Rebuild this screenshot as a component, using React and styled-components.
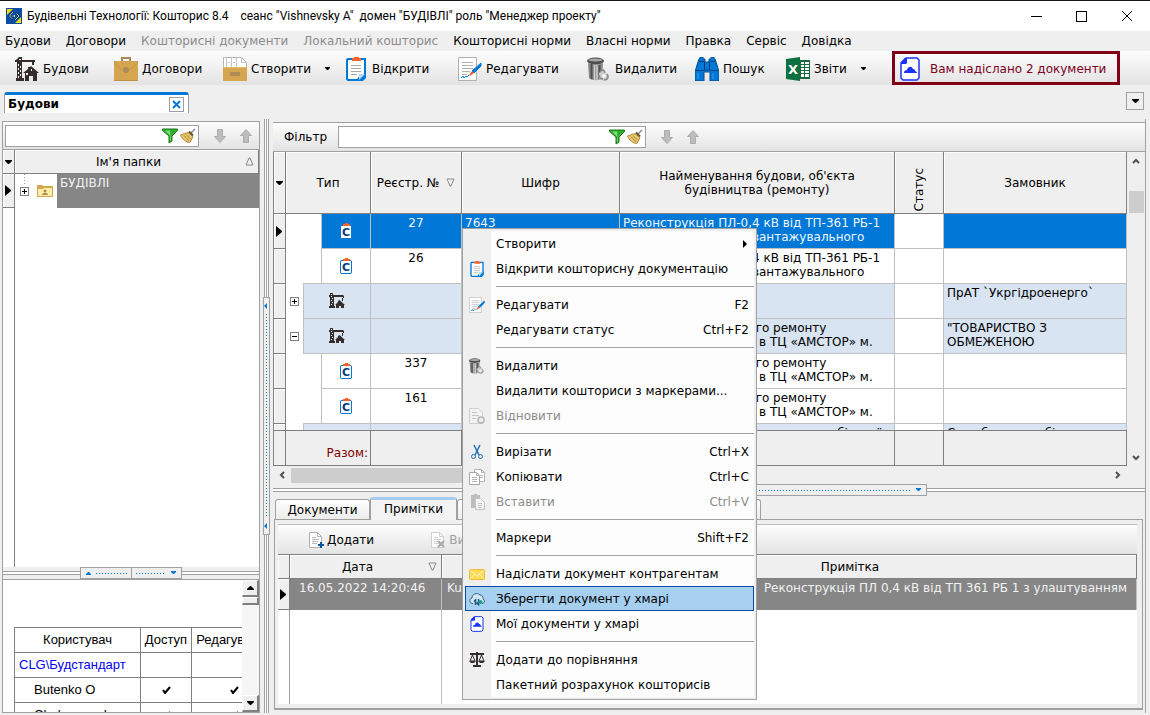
import { useState } from "react";
import styled, { createGlobalStyle, css } from "styled-components";

const GlobalStyle = createGlobalStyle`
  * {
    box-sizing: border-box;
  }
  body {
    margin: 0;
    background: #efefef;
    color: #000;
    font-family: "DejaVu Sans", sans-serif;
    font-size: 12px;
    line-height: 14px;
  }
  button, input {
    font: inherit;
    color: inherit;
    margin: 0;
    padding: 0;
    border: 0;
    background: none;
  }
  svg {
    display: block;
    flex: none;
  }
  table {
    border-collapse: separate;
    border-spacing: 0;
  }
`;

const line = "#a0a0a0";
const dark = "#7f7f7f";
const blue = "#0078d7";
const bars = "linear-gradient(#fdfdfd, #e3e3e3)";

/* ---------- icons ---------- */

const Svg = ({ size = 16, box = 16, children }) => (
  <svg width={size} height={size} viewBox={`0 0 ${box} ${box}`} aria-hidden="true">
    {children}
  </svg>
);

const LogoIcon = () => (
  <Svg>
    <path d="M0 0h16v16H0z" fill="#0a4da2" />
    <path d="M1 1h6L1 7zM15 15H9l6-6z" fill="#f5d90a" />
    <path d="M7 4L3.500 8L6 10.500M9 12l4-4-2.500-2.500" fill="none" stroke="#0a3f86" strokeWidth="3" />
    <path d="M7 4L3.500 8L6 10.500M9 12l4-4-2.500-2.500M6.500 8H8M8.500 7v2" fill="none" stroke="#b9c48c" />
  </Svg>
);

const CraneIcon = ({ size }) => (
  <Svg size={size} box={24}>
    <g fill="#352c2c">
      <path d="M1 3l3-3h3v3h13v2h-1v3h-2V5H7v16h2v3H1v-3h1V5H0V3z" />
      <path d="M16 9l8 7h-2v8h-4v-5h-4v5h-4v-8H8l5-4v-2h2z" />
    </g>
    <path d="M3 7h1v2H3zM5 9h1v2H5zM3 11h1v2H3zM5 13h1v2H5zM3 15h1v2H3zM5 17h1v2H5zM3 19h1v2H3zM4 2h2v1H4z" fill="#fff" />
    <path d="M11 16h2v2h-2zM16 12h1v2h-1z" fill="#eee" />
  </Svg>
);

const SmallCraneIcon = () => (
  <Svg>
    <path d="M1 0h3v2h10l1 1v2h-1V4H5v9h1v2H0v-2h1V4H0V2h1z" fill="#352c2c" />
    <path d="M13 5h1v3h-1zM10.500 7L16 12h-1v3h-3v-2h-2v2H7v-3H6l3-3V8z" fill="#352c2c" />
    <path d="M2 3h1v1H2zM3 5h1v1H3zM2 7h1v1H2zM3 9h1v1H3zM2 11h1v1H2zM2 1h1v1H2z" fill="#fff" />
  </Svg>
);

const BriefcaseIcon = () => (
  <Svg size={24} box={24}>
    <path d="M8 4V1h8v3" fill="none" stroke="#a98a5d" strokeWidth="2" />
    <path d="M0 4h24v20H0z" fill="#d5a550" />
    <path d="M0 4c3 6 7 9 12 9s9-3 12-9" fill="none" stroke="#c49345" />
    <circle cx="12" cy="13" r="3" fill="#ad8a58" />
    <path d="M0 23.500h24" stroke="#c08f43" />
  </Svg>
);

const DrawerIcon = () => (
  <Svg size={24} box={24}>
    <path d="M0.500 0.500h18l5 5v6h-23z" fill="#fff" stroke="#b5b5b5" />
    <path d="M3.500 1v9M8.500 1v9M13.500 1v9M5 5.500h2M10 5.500h2M18.500 1v4.500h5" fill="none" stroke="#c4c4c4" />
    <path d="M0 10h24v14H0z" fill="#d5a550" />
    <path d="M0 10h24v1H0z" fill="#e3bb74" />
    <path d="M7 15h10v4H7z" fill="#ad8a58" />
  </Svg>
);

const ClipboardIcon = ({ size }) => (
  <Svg size={size} box={24}>
    <path d="M4 2h17v17l-4 4H4l-1-1V3z" fill="#fff" stroke={blue} strokeWidth="2" />
    <path d="M13 24v-2l3-4 6-2v5l-3 3z" fill={blue} />
    <path d="M15 17h6l-6 6z" fill="#b8dbf7" />
    <path d="M8 1h2V0h5v1h2v3H8z" fill="#f7632a" />
    <path d="M7 8.500h10M7 11.500h10M7 14.500h10M7 17.500h6" stroke="#a8a8a8" />
  </Svg>
);

const EditIcon = ({ size }) => (
  <Svg size={size} box={24}>
    <path d="M0.500 0.500h18v23h-18z" fill="#fff" stroke="#b0b0b0" />
    <path d="M4 5.500h11M4 8.500h11M4 11.500h11M4 14.500h8M4 17.500h5" stroke="#b0b0b0" />
    <path d="M23 6v3l-7 7-2-2z" fill={blue} stroke={blue} />
    <path d="M14 14l2 2-4 3-1-1z" fill="#f7632a" />
    <path d="M3 21l2-2 1 2 2-2 1 1 2-2" fill="none" stroke={blue} />
  </Svg>
);

const TrashIcon = ({ size }) => (
  <Svg size={size} box={24}>
    <path d="M1 6c4 2 11 2 15 0l-1 15c-3 3-10 3-13 0z" fill="#8a8a8a" />
    <path d="M4.500 7v15M12.500 8v14" stroke="#505050" strokeWidth="2" />
    <path d="M7.500 8v15M10 8v15" stroke="#cfcfcf" strokeWidth="1.500" />
    <ellipse cx="8.500" cy="4" rx="8.500" ry="3.500" fill="#4f4f4f" />
    <ellipse cx="8.500" cy="3" rx="7" ry="1.500" fill="#a9a9a9" />
    <path d="M12 16l5-5 1 5 4 2-1 4-4 2-5-2z" fill="#c9c9c9" />
    <path d="M13 15c2-3 5-2 5 1M20 17c2 3 1 6-3 6M12 18c0 3 2 4 4 4" fill="none" stroke="#8a8a8a" strokeWidth="1.500" />
    <circle cx="17" cy="19" r="2" fill="#f4f4f4" />
  </Svg>
);

const BinocularsIcon = () => (
  <Svg size={24} box={24}>
    <path
      d="M4 2h1V0h3v2h2v3h4V2h2V0h3v2h1l2 6 2 7v9h-9v-9h-6v9H0v-9l2-7z"
      fill={blue}
      stroke="#004f94"
    />
    <path d="M1 13.500h8M15 13.500h8M9.500 5v8h5V5M4 4.500h5M15 4.500h5" fill="none" stroke="#003e77" />
    <path d="M3 16v6M18 16v6" stroke="#3c9ce8" />
  </Svg>
);

const ExcelIcon = () => (
  <Svg size={24} box={24}>
    <path d="M12 3h12v19H12z" fill="#17693e" />
    <path
      d="M15 5h3v2h-3zM19 5h4v2h-4zM15 8h3v2h-3zM19 8h4v2h-4zM15 11h3v2h-3zM19 11h4v2h-4zM15 14h3v2h-3zM19 14h4v2h-4zM15 17h3v3h-3zM19 17h4v3h-4z"
      fill="#fff"
    />
    <path d="M0 2l14-2v24L0 22z" fill="#0d7040" />
    <text x="7" y="17" textAnchor="middle" fontSize="13" fontWeight="700" fill="#fff">
      X
    </text>
  </Svg>
);

const CloudDocIcon = ({ size }) => (
  <Svg size={size} box={24}>
    <path d="M8 1h11l2 2v18l-2 2H5l-2-2V6z" fill="#fff" stroke="#1a34ff" strokeWidth="1.500" />
    <path d="M3 7V5l4-4h2v5l-1 1z" fill="#1a34ff" />
    <path d="M6 16c0-2 1-3 3-3 1-4 5-4 6-1 2 0 2 1 2 2 1 0 2 1 2 2z" fill="#1a34ff" />
  </Svg>
);

const FunnelIcon = () => (
  <Svg>
    <path d="M0.500 1h15v1.500L10 8v5l-3 2V8L0.500 2.500z" fill="#2fae2f" stroke="#177a17" />
    <path d="M3 2.500h5l1 10-1 .500V7.500z" fill="#7fdc7f" />
  </Svg>
);

const BroomIcon = () => (
  <Svg>
    <path d="M14.500 0.500l1 1-4 4-1-1z" fill="#7b8ca3" />
    <path d="M8 4.500l5 4-3 6C6 14.500 2 11 .500 7z" fill="#e6c66e" stroke="#b08c38" />
    <path d="M4 7.500l5 5.500M6 6.500l5 5" stroke="#b08c38" />
    <path d="M9 3.500l4 4" stroke="#6d5a2c" strokeWidth="2" />
  </Svg>
);

const ArrowIcon = ({ up }) => (
  <Svg>
    <path
      d={up ? "M8 1.500l5.500 6h-3v7h-5v-7h-3z" : "M8 14.500l-5.500-6h3v-7h5v7h3z"}
      fill="#bdbdbd"
      stroke="#ababab"
    />
  </Svg>
);

const FolderIcon = () => (
  <Svg>
    <path d="M0 2h5l1 1h10v11H0z" fill="#d5a550" />
    <path d="M1 6h5l1-1h8v8H1z" fill="#fdeea8" />
    <circle cx="8" cy="8" r="1.500" fill="#ad8a58" />
    <path d="M5 12v-1l2-1h2l2 1v1z" fill="#ad8a58" />
  </Svg>
);

const EstimateIcon = () => (
  <Svg>
    <path d="M3 2.500h10l.500 .500v12l-.500 .500H3l-.500-.500V3z" fill="#fff" stroke={blue} />
    <path d="M5 1h2V0h3v1h2v2H5z" fill="#f7632a" />
    <text x="8" y="13" textAnchor="middle" fontSize="11" fontWeight="700" fill="#0b3a78">
      C
    </text>
  </Svg>
);

const RestoreIcon = () => (
  <Svg>
    <path d="M0.500 0.500h9l4 4v11h-13z" fill="#f2f2f2" stroke="#cfcfcf" />
    <path d="M3 4.500h5M3 7.500h7M3 10.500h4" stroke="#c4c4c4" />
    <circle cx="12" cy="12" r="3" fill="#eee" stroke="#b5b5b5" strokeWidth="1.500" />
  </Svg>
);

const ScissorsIcon = () => (
  <Svg>
    <path d="M5 1l5 10M11 1L6 11" stroke="#1d70b8" strokeWidth="1.500" />
    <circle cx="4.500" cy="12.500" r="2" fill="none" stroke="#1d70b8" />
    <circle cx="11.500" cy="12.500" r="2" fill="none" stroke="#1d70b8" />
  </Svg>
);

const CopyIcon = () => (
  <Svg>
    <path d="M5.500 0.500h7l3 3v9h-10z" fill="#fff" stroke="#b5b5b5" />
    <path d="M12.500 0.500v3h3M11 6.500h3M11 8.500h3" fill="none" stroke="#b5b5b5" />
    <path d="M0.500 3.500h7l3 3v9h-10z" fill="#fff" stroke="#a8a8a8" />
    <path d="M7.500 3.500v3h3M3 8.500h5M3 10.500h5M3 12.500h5" fill="none" stroke="#b5b5b5" />
  </Svg>
);

const PasteIcon = () => (
  <Svg>
    <path d="M2 1h3V0h3v1h3v13H2z" fill="#bdbdbd" />
    <path d="M6.500 4.500h5l4 4v7h-9z" fill="#f3f3f3" stroke="#c4c4c4" />
    <path d="M9 9.500h4M9 11.500h4M9 13.500h4" stroke="#c4c4c4" />
  </Svg>
);

const EnvelopeIcon = () => (
  <Svg>
    <rect x="0.500" y="3.500" width="15" height="10" rx="1" fill="#fddc5c" stroke="#f3b93a" />
    <path d="M2 5l6 5 6-5M2 12l4-4M14 12l-4-4" fill="none" stroke="#fff3bd" />
  </Svg>
);

const CloudSyncIcon = () => (
  <Svg>
    <path
      d="M4 12.500C0 12.500 0 7.500 3 7c0-4 5-6 8-3 3 0 3 3 3 4 2 1 2 4-1 4.500"
      fill="#cfe6f7"
      stroke="#35597a"
    />
    <path d="M6.500 14V9L5 10.500M9.500 8v5.500l-2-2" fill="none" stroke="#1f4e78" strokeWidth="1.500" />
    <circle cx="11.500" cy="11" r="2" fill="#17a589" />
  </Svg>
);

const ScalesIcon = () => (
  <Svg>
    <path d="M7 0h2v1h6v2H9v10h3v2H4v-2h3V3H1V1h6z" fill="#352c2c" />
    <path d="M3.500 3L1 9h5zM12.500 3L10 9h5z" fill="none" stroke="#352c2c" />
    <path d="M0 9h7l-2 2H2zM9 9h7l-2 2h-3z" fill="#352c2c" />
  </Svg>
);

const NoteIcon = ({ remove }) => (
  <Svg>
    <path d="M1.500 0.500h8l4 4v11h-12z" fill="#fff" stroke={remove ? "#d0d0d0" : "#b0b0b0"} />
    <path
      d="M9.500 0.500v4h4M4 5.500h4M4 7.500h7M4 9.500h6M4 11.500h5"
      fill="none"
      stroke={remove ? "#d0d0d0" : "#b5b5b5"}
    />
    {remove ? (
      <path d="M8 9l6 6M14 9l-6 6" stroke="#a8a8a8" strokeWidth="2" />
    ) : (
      <path d="M13 10v6M10 13h6" stroke="#0a55a5" strokeWidth="2" />
    )}
  </Svg>
);

const shapes = {
  down: "M0 2h7v1L4 6H3L0 3z",
  up: "M0 6h7V5L4 2H3L0 5z",
  left: "M5 0v8L1 4z",
  right: "M1 0v8l4-4z",
};

const smallShapes = {
  down: "M1 2h5v1L4 5H3L1 3z",
  up: "M1 6h5V5L4 3H3L1 5z",
  left: "M4 1v6L1 4z",
};

const Arrow = ({ dir, small, color = "#000" }) => (
  <svg width="7" height="8" viewBox="0 0 7 8" aria-hidden="true">
    <path d={small ? smallShapes[dir] : shapes[dir]} fill={color} />
  </svg>
);

const RowPointer = () => (
  <svg width="6" height="11" viewBox="0 0 6 11" aria-hidden="true">
    <path d="M0 0l6 5v1l-6 5z" fill="#000" />
  </svg>
);

const SortMark = ({ up }) => (
  <svg width="9" height="9" viewBox="0 0 9 9" aria-hidden="true">
    <path d={up ? "M4 1L1 8h7L5 1z" : "M4 8L1 1h7L5 8z"} fill="none" stroke="#8a8a8a" />
  </svg>
);

const Chevron = ({ dir }) => {
  const d = {
    up: "M1 6l3-3 3 3",
    down: "M1 2l3 3 3-3",
    left: "M6 1L3 4l3 3",
    right: "M2 1l3 3-3 3",
  };
  return (
    <svg width="8" height="8" viewBox="0 0 8 8" aria-hidden="true">
      <path d={d[dir]} fill="none" stroke="#505050" strokeWidth="2" />
    </svg>
  );
};

/* ---------- window frame ---------- */

const Window = styled.div`
  display: flex;
  flex-direction: column;
  width: 100%;
  height: 100vh;
  overflow: hidden;
`;

const TitleBar = styled.header`
  display: flex;
  align-items: center;
  flex: none;
  height: 31px;
  padding: 0 17px 0 6px;
  border-top: 1px solid #1a1318;
  background: #fff;
`;

const Title = styled.h1`
  flex: 1;
  margin: 0 0 0 5px;
  font: 400 12px/16px Roboto, "Noto Sans", sans-serif;
  white-space: pre;
`;

const WindowButtons = styled.div`
  display: flex;
  gap: 34px;
`;

const MenuBar = styled.nav`
  display: flex;
  align-items: center;
  flex: none;
  gap: 15px;
  height: 20px;
  padding: 0 5px;
`;

const MenuBarItem = styled.button`
  white-space: nowrap;
  &:disabled {
    color: #8c8c8c;
  }
`;

const Toolbar = styled.div`
  display: flex;
  flex: none;
  height: 34px;
  padding-left: 15px;
  background: ${bars};
`;

const ToolButton = styled.button`
  display: flex;
  align-items: center;
  gap: 4px;
  width: ${(p) => p.$width}px;
  padding-top: 1px;
  white-space: nowrap;
  & > svg:last-child:not(:first-child) {
    margin-left: 9px;
  }
`;

const Alert = styled.button`
  display: flex;
  align-items: center;
  gap: 8px;
  width: 228px;
  padding: 1px 3px 0;
  border: 3px solid #800018;
  color: #80001c;
  white-space: nowrap;
`;

const TabStrip = styled.div`
  display: flex;
  align-items: flex-start;
  justify-content: space-between;
  flex: none;
  height: 34px;
  padding: 7px 6px 0 4px;
`;

const PageTab = styled.div`
  display: flex;
  align-items: center;
  justify-content: space-between;
  width: 185px;
  height: 21px;
  padding: 0 4px 0 3px;
  border: 1px solid ${line};
  border-top: 3px solid ${blue};
  border-bottom: 0;
  border-radius: 3px 3px 0 0;
  background: #fff;
  font-weight: 700;
`;

const BoxButton = styled.button`
  display: flex;
  align-items: center;
  justify-content: center;
  width: ${(p) => p.$size}px;
  height: ${(p) => p.$size}px;
  border: 1px solid ${line};
`;

const Workspace = styled.main`
  display: flex;
  flex: 1;
  min-height: 0;
  gap: 3px;
  padding: 0 4px 2px 2px;
`;

/* ---------- splitters ---------- */

const Splitter = styled.div`
  display: flex;
  align-items: center;
  justify-content: center;
  flex: none;
  ${(p) =>
    p.$vertical
      ? css`
          width: 7px;
          background: linear-gradient(
            to right,
            transparent 1px,
            ${line} 1px 2px,
            #fff 2px 3px,
            ${line} 3px 4px,
            #fff 4px 5px,
            ${line} 5px 6px,
            transparent 6px
          );
        `
      : css`
          height: 12px;
          background: linear-gradient(
            transparent 4px,
            ${line} 4px 5px,
            #fff 5px 7px,
            ${line} 7px 8px,
            transparent 8px
          );
        `}
`;

const Handle = styled.div`
  display: flex;
  align-items: center;
  justify-content: space-between;
  gap: 4px;
  border: 1px solid ${line};
  background: #efefef;
  ${(p) =>
    p.$vertical
      ? css`
          flex-direction: column;
          width: 7px;
          height: ${p.$length}px;
          padding: 4px 0;
        `
      : css`
          width: ${p.$length}px;
          height: 12px;
          padding: 0 4px;
        `}
`;

const Dots = styled.span`
  flex: 1;
  ${(p) =>
    p.$vertical
      ? css`
          width: 1px;
          background: repeating-linear-gradient(${blue} 0 1px, transparent 1px 3px);
        `
      : css`
          height: 1px;
          background: repeating-linear-gradient(to right, ${blue} 0 1px, transparent 1px 3px);
        `}
`;

const HandleSplit = styled.span`
  width: 1px;
  align-self: stretch;
  background: ${line};
`;

/* ---------- shared grid parts ---------- */

const FilterBar = styled.div`
  display: flex;
  align-items: center;
  flex: none;
  gap: 10px;
  height: ${(p) => p.$height}px;
  padding: 0 2px;
  border-top: 1px solid ${line};
  border-bottom: 1px solid ${line};
  background: ${bars};
`;

const FilterLabel = styled.label`
  padding: 0 1px 0 9px;
`;

const SearchBox = styled.div`
  display: flex;
  align-items: center;
  gap: 2px;
  width: ${(p) => p.$width}px;
  height: 22px;
  margin-right: 3px;
  padding-right: 2px;
  border: 1px solid ${line};
  background: #fff;
`;

const SearchInput = styled.input`
  flex: 1;
  min-width: 0;
  height: 18px;
  padding: 0 4px;
  outline: 0;
`;

const Grid = styled.table`
  width: 100%;
  table-layout: fixed;
`;

const HeadCell = styled.th`
  height: ${(p) => p.$height}px;
  padding: 0 ${(p) => (p.$side ? 0 : 4)}px;
  border-right: 1px solid ${dark};
  border-bottom: 1px solid ${dark};
  background: #efefef;
  box-shadow: inset 1px 1px #fff;
  font-weight: 400;
`;

const HeadInner = styled.div`
  display: flex;
  align-items: center;
  justify-content: center;
  gap: 7px;
  white-space: nowrap;
  & > span {
    flex: ${(p) => (p.$spread ? 1 : "none")};
  }
`;

const SideCell = styled.td`
  padding: 0 0 0 2px;
  border-right: 1px solid ${dark};
  border-bottom: 1px solid ${dark};
  background: #efefef;
  box-shadow: inset 1px 1px #fff;
`;

const VerticalText = styled.div`
  width: 14px;
  margin: 14px auto 0;
  writing-mode: vertical-rl;
  transform: rotate(180deg);
`;

const Expander = styled.button`
  display: flex;
  align-items: center;
  justify-content: center;
  flex: none;
  width: 9px;
  height: 9px;
  border: 1px solid ${dark};
  background: #fff;
`;

const ExpanderSign = ({ open }) => (
  <svg width="5" height="5" viewBox="0 0 5 5" aria-hidden="true">
    <path d={open ? "M0 2h5v1H0z" : "M0 2h2V0h1v2h2v1H3v2H2V3H0z"} fill="#000" />
  </svg>
);

/* ---------- left pane ---------- */

const LeftPane = styled.section`
  display: flex;
  flex-direction: column;
  flex: none;
  width: 258px;
  margin-top: 2px;
  border-left: 1px solid ${line};
  border-right: 1px solid ${line};
`;

const TreeArea = styled.div`
  flex: 1;
  min-height: 0;
  overflow: hidden;
  background: linear-gradient(to right, transparent 11px, ${dark} 11px 12px, transparent 12px) #fff;
`;

const TreeLines = styled.div`
  display: flex;
  align-items: center;
  gap: 8px;
  height: 34px;
  padding-left: 5px;
  background: repeating-linear-gradient(#999 0 1px, transparent 1px 3px) 9px 0 / 1px 12px no-repeat;
`;

const TreeCell = styled.td`
  padding: 0;
`;

const FolderCell = styled.td`
  padding: 2px 3px;
  vertical-align: top;
  background: #868686;
  color: #f2f2f2;
`;

const UsersPane = styled.div`
  display: flex;
  flex: none;
  height: 134px;
  border-top: 1px solid ${line};
  border-bottom: 1px solid ${line};
  background: #fff;
`;

const UsersScroll = styled.div`
  flex: 1;
  min-width: 0;
  padding: 47px 0 0 11px;
  overflow: hidden;
`;

const UsersTable = styled.table`
  width: 264px;
  table-layout: fixed;
  border-top: 1px solid #808080;
  border-left: 1px solid #808080;
  font: 13px/16px "Liberation Sans", sans-serif;

  th,
  td {
    height: 25px;
    padding: 0 3px;
    border-right: 1px solid #808080;
    border-bottom: 1px solid #808080;
    font-weight: 400;
  }
`;

const UserCell = styled.td`
  && {
    padding-left: ${(p) => (p.$group ? 4 : 19)}px;
  }
  color: ${(p) => (p.$group ? "#0000f0" : "#000")};
`;

const CheckCell = styled.td`
  svg {
    margin: 0 auto;
  }
`;

const ClassicScroll = styled.div`
  display: flex;
  flex-direction: column;
  justify-content: space-between;
  width: 17px;
  background: #f6f6f6;
`;

const Raised = styled.button`
  display: flex;
  align-items: center;
  justify-content: center;
  width: 17px;
  height: ${(p) => p.$height}px;
  border: 1px solid #fff;
  border-right: 2px solid #808080;
  border-bottom: 2px solid #808080;
  background: #efefef;
`;

/* ---------- right pane ---------- */

const RightPane = styled.section`
  position: relative;
  display: flex;
  flex-direction: column;
  flex: 1;
  min-width: 0;
  padding-top: 3px;
  border-right: 1px solid ${line};
`;

const GridRow = styled.div`
  display: flex;
  flex: none;
`;

const GridColumn = styled.div`
  flex: 1;
  min-width: 0;
`;

const GridView = styled.div`
  height: 278px;
  overflow: hidden;
  border-left: 1px solid ${dark};
  background: #fff;
`;

const Cell = styled.td`
  height: 35px;
  padding: 2px 3px;
  border-right: 1px solid #c0c0c0;
  border-bottom: 1px solid #c0c0c0;
  background: ${(p) => (p.$selected ? blue : p.$group ? "#d8e4f1" : "#fff")};
  color: ${(p) => (p.$selected ? "#f0f6fc" : "#000")};
  text-align: ${(p) => (p.$center ? "center" : "left")};
  vertical-align: top;
  white-space: pre;
  overflow: hidden;
`;

const TypeCell = styled.td`
  height: 35px;
  padding: 0;
  border-right: 1px solid #c0c0c0;
`;

const TypeInner = styled.div`
  display: flex;
  height: 35px;
`;

const Indent = styled.div`
  display: flex;
  align-items: center;
  justify-content: center;
  width: ${(p) => p.$width}px;
  border-bottom: ${(p) => (p.$ruled ? "1px solid #c0c0c0" : 0)};
`;

const TypeIcon = styled.div`
  display: flex;
  align-items: center;
  flex: 1;
  padding-left: ${(p) => (p.$group ? 25 : 16)}px;
  border-left: 1px solid #c0c0c0;
  border-bottom: 1px solid #c0c0c0;
  background: ${(p) => (p.$selected ? blue : p.$group ? "#d8e4f1" : "#fff")};
`;

const TotalsTable = styled(Grid)`
  border-left: 1px solid ${dark};
  border-top: 1px solid ${dark};

  td {
    height: 35px;
    padding: 10px 2px 0 0;
    border-right: 1px solid ${dark};
    border-bottom: 1px solid ${dark};
    color: #800000;
    text-align: right;
  }
`;

const ScrollV = styled.div`
  display: flex;
  flex-direction: column;
  align-items: center;
  justify-content: space-between;
  width: 18px;
  padding: 5px 0 4px;
`;

const ThumbV = styled.span`
  width: 15px;
  height: 22px;
  margin-bottom: 216px;
  background: #cdcdcd;
`;

const ScrollH = styled.div`
  display: flex;
  align-items: center;
  flex: none;
  gap: 5px;
  height: 18px;
  padding: 0 23px 0 5px;
`;

const ThumbH = styled.span`
  flex: 1;
  height: 15px;
  margin-right: 45%;
  background: #cdcdcd;
`;

const Tabs = styled.div`
  display: flex;
  align-items: flex-end;
  flex: none;
  height: 23px;
  padding-left: 2px;
`;

const Tab = styled.button`
  width: ${(p) => p.$width}px;
  height: ${(p) => (p.$active ? 23 : 20)}px;
  margin-bottom: ${(p) => (p.$active ? -1 : 0)}px;
  padding-bottom: ${(p) => (p.$active ? 2 : 0)}px;
  border: 1px solid ${line};
  border-bottom: 0;
  border-top: ${(p) => (p.$active ? "3px solid #a6cdf0" : `1px solid ${line}`)};
  border-radius: 3px 3px 0 0;
  background: ${(p) => (p.$active ? "#f3f3f3" : "linear-gradient(#fff, #ececec)")};
  z-index: ${(p) => (p.$active ? 1 : 0)};
`;

const NotesPanel = styled.div`
  display: flex;
  flex-direction: column;
  flex: 1;
  min-height: 0;
  margin: 0 2px 3px 1px;
  padding: 4px 5px 4px 3px;
  border: 1px solid ${line};
  border-bottom-width: 2px;
`;

const NotesBar = styled.div`
  display: flex;
  align-items: center;
  flex: none;
  gap: 56px;
  height: 31px;
  padding-left: 30px;
  border-top: 1px solid #c0c0c0;
  border-bottom: 1px solid ${dark};
  background: ${bars};
`;

const NoteButton = styled.button`
  display: flex;
  align-items: center;
  gap: 3px;
  &:disabled {
    color: #a0a0a0;
  }
`;

const NotesView = styled.div`
  flex: 1;
  min-height: 0;
  overflow: hidden;
  background: linear-gradient(
      to right,
      transparent 11px,
      ${line} 11px 12px,
      transparent 12px 163px,
      #c0c0c0 163px 164px,
      transparent 164px
    )
    #fff;
`;

const NoteCell = styled.td`
  height: 31px;
  padding: 2px 9px 2px ${(p) => p.$inset || 9}px;
  border-right: 1px solid #c0c0c0;
  background: #868686;
  color: #f2f2f2;
  text-align: ${(p) => p.$align || "left"};
  vertical-align: top;
  white-space: nowrap;
`;

/* ---------- context menu ---------- */

const Menu = styled.div`
  position: absolute;
  top: 109px;
  left: 189px;
  z-index: 5;
  width: 295px;
  padding: 2px;
  border: 1px solid ${line};
  background: #efefef;
`;

const MenuList = styled.ul`
  margin: 0;
  padding: 0;
  list-style: none;
  background: linear-gradient(to right, #efefef 26px, #fdfdfd 26px);
`;

const MenuItem = styled.button`
  display: flex;
  align-items: center;
  width: 100%;
  height: 25px;
  padding: 0 4px 0 3px;
  border: 1px solid ${(p) => (p.$active ? "#0a4ca0" : "transparent")};
  background: ${(p) => (p.$active ? "#a6cff0" : "none")};
  white-space: nowrap;
  &:disabled {
    color: #8c8c8c;
  }
`;

const MenuIcon = styled.span`
  width: 27px;
`;

const MenuLabel = styled.span`
  flex: 1;
  text-align: left;
`;

const MenuRule = styled.li`
  height: 11px;
  padding: 5px 0 5px 31px;
  &::before {
    content: "";
    display: block;
    height: 1px;
    background: ${line};
  }
`;

/* ---------- data ---------- */

const menuBar = [
  { label: "Будови" },
  { label: "Договори" },
  { label: "Кошторисні документи", disabled: true },
  { label: "Локальний кошторис", disabled: true },
  { label: "Кошторисні норми" },
  { label: "Власні норми" },
  { label: "Правка" },
  { label: "Сервіс" },
  { label: "Довідка" },
];

const tools = [
  { label: "Будови", icon: <CraneIcon size={24} />, width: 99 },
  { label: "Договори", icon: <BriefcaseIcon />, width: 109 },
  { label: "Створити", icon: <DrawerIcon />, width: 121, drop: true },
  { label: "Відкрити", icon: <ClipboardIcon size={24} />, width: 114 },
  { label: "Редагувати", icon: <EditIcon size={24} />, width: 129 },
  { label: "Видалити", icon: <TrashIcon size={24} />, width: 108 },
  { label: "Пошук", icon: <BinocularsIcon />, width: 91 },
  { label: "Звіти", icon: <ExcelIcon />, width: 106, drop: true },
];

const line361 = "Реконструкція ПЛ-0,4 кВ від ТП-361 РБ-1\nз улаштуванням розвантажувального";
const amstor = "Проведення поточного ремонту\nприміщень магазину в ТЦ «АМСТОР» м.";

const rows = [
  { number: "27", code: "7643", name: line361, selected: true },
  { number: "26", code: "7642", name: line361, ruled: true },
  { group: true, customer: "ПрАТ `Укргідроенерго`" },
  { group: true, open: true, name: amstor, customer: "\"ТОВАРИСТВО З\nОБМЕЖЕНОЮ" },
  { number: "337", name: amstor },
  { number: "161", name: amstor, ruled: true },
  {
    group: true,
    name: "Поточний дрібний ремонт автомобільної",
    customer: "Служба автомобільних",
  },
];

const menu = [
  { label: "Створити", sub: true },
  { label: "Відкрити кошторисну документацію", icon: <ClipboardIcon size={16} /> },
  null,
  { label: "Редагувати", icon: <EditIcon size={16} />, keys: "F2" },
  { label: "Редагувати статус", keys: "Ctrl+F2" },
  null,
  { label: "Видалити", icon: <TrashIcon size={16} /> },
  { label: "Видалити кошториси з маркерами..." },
  { label: "Відновити", icon: <RestoreIcon />, disabled: true },
  null,
  { label: "Вирізати", icon: <ScissorsIcon />, keys: "Ctrl+X" },
  { label: "Копіювати", icon: <CopyIcon />, keys: "Ctrl+C" },
  { label: "Вставити", icon: <PasteIcon />, keys: "Ctrl+V", disabled: true },
  null,
  { label: "Маркери", keys: "Shift+F2" },
  null,
  { label: "Надіслати документ контрагентам", icon: <EnvelopeIcon /> },
  { label: "Зберегти документ у хмарі", icon: <CloudSyncIcon /> },
  { label: "Мої документи у хмарі", icon: <CloudDocIcon size={16} /> },
  null,
  { label: "Додати до порівняння", icon: <ScalesIcon /> },
  { label: "Пакетний розрахунок кошторисів" },
];

/* ---------- parts ---------- */

const Check = () => (
  <svg width="9" height="8" viewBox="0 0 9 8" aria-label="так" role="img">
    <path d="M1 4l2 3 5-6" fill="none" stroke="#000" strokeWidth="2" />
  </svg>
);

const Search = ({ id, label, width }) => {
  const [text, setText] = useState("");
  return (
    <>
      <SearchBox $width={width}>
        <SearchInput
          id={id}
          aria-label={label}
          value={text}
          onChange={(e) => setText(e.target.value)}
        />
        <button aria-label="Застосувати фільтр">
          <FunnelIcon />
        </button>
        <button aria-label="Очистити фільтр" onClick={() => setText("")}>
          <BroomIcon />
        </button>
      </SearchBox>
      <button aria-label="Наступний">
        <ArrowIcon />
      </button>
      <button aria-label="Попередній">
        <ArrowIcon up />
      </button>
    </>
  );
};

const GridCols = () => (
  <colgroup>
    <col style={{ width: 12 }} />
    <col style={{ width: 85 }} />
    <col style={{ width: 91 }} />
    <col style={{ width: 158 }} />
    <col />
    <col style={{ width: 49 }} />
    <col style={{ width: 183 }} />
  </colgroup>
);

const Folders = () => (
  <LeftPane>
    <FilterBar $height={29}>
      <Search label="Пошук папки" width={194} />
    </FilterBar>
    <TreeArea>
      <Grid>
        <colgroup>
          <col style={{ width: 12 }} />
          <col style={{ width: 42 }} />
          <col />
        </colgroup>
        <thead>
          <tr>
            <HeadCell $height={24} $side>
              <HeadInner>
                <Arrow dir="down" />
              </HeadInner>
            </HeadCell>
            <HeadCell colSpan={2}>
              <HeadInner $spread>
                <span>Ім'я папки</span>
                <SortMark up />
              </HeadInner>
            </HeadCell>
          </tr>
        </thead>
        <tbody>
          <tr>
            <SideCell>
              <RowPointer />
            </SideCell>
            <TreeCell>
              <TreeLines>
                <Expander aria-label="Розгорнути">
                  <ExpanderSign />
                </Expander>
                <FolderIcon />
              </TreeLines>
            </TreeCell>
            <FolderCell>БУДІВЛІ</FolderCell>
          </tr>
        </tbody>
      </Grid>
    </TreeArea>
    <Splitter>
      <Handle $length={102}>
        <Arrow dir="up" small color={blue} />
        <Dots />
        <HandleSplit />
        <Dots />
        <Arrow dir="down" small color={blue} />
      </Handle>
    </Splitter>
    <UsersPane>
      <UsersScroll>
        <UsersTable>
          <colgroup>
            <col style={{ width: 126 }} />
            <col style={{ width: 51 }} />
            <col />
          </colgroup>
          <thead>
            <tr>
              <th>Користувач</th>
              <th>Доступ</th>
              <th>Редагування</th>
            </tr>
          </thead>
          <tbody>
            <tr>
              <UserCell $group>CLG\Будстандарт</UserCell>
              <td />
              <td />
            </tr>
            {["Butenko O", "Chekanova I"].map((user) => (
              <tr key={user}>
                <UserCell>{user}</UserCell>
                <CheckCell>
                  <Check />
                </CheckCell>
                <CheckCell>
                  <Check />
                </CheckCell>
              </tr>
            ))}
          </tbody>
        </UsersTable>
      </UsersScroll>
      <ClassicScroll>
        <div>
          <Raised $height={17} aria-label="Вгору">
            <Arrow dir="up" />
          </Raised>
          <Raised $height={8} aria-label="Повзунок" />
        </div>
        <Raised $height={17} aria-label="Вниз">
          <Arrow dir="down" />
        </Raised>
      </ClassicScroll>
    </UsersPane>
  </LeftPane>
);

const ProjectRow = ({ row }) => (
  <tr>
    <SideCell>{row.selected && <RowPointer />}</SideCell>
    <TypeCell>
      <TypeInner>
        <Indent $width={17}>
          {row.group && (
            <Expander aria-label={row.open ? "Згорнути" : "Розгорнути"}>
              <ExpanderSign open={row.open} />
            </Expander>
          )}
        </Indent>
        {!row.group && <Indent $width={18} $ruled={row.ruled} />}
        <TypeIcon $group={row.group} $selected={row.selected}>
          {row.group ? <SmallCraneIcon /> : <EstimateIcon />}
        </TypeIcon>
      </TypeInner>
    </TypeCell>
    <Cell $center $group={row.group} $selected={row.selected}>
      {row.number}
    </Cell>
    <Cell $group={row.group} $selected={row.selected}>
      {row.code}
    </Cell>
    <Cell $group={row.group} $selected={row.selected}>
      {row.name}
    </Cell>
    <Cell />
    <Cell $group={row.group} $selected={row.selected}>
      {row.customer}
    </Cell>
  </tr>
);

const Projects = () => (
  <>
    <GridRow>
      <GridColumn>
        <GridView>
          <Grid>
            <GridCols />
            <thead>
              <tr>
                <HeadCell $height={62} $side>
                  <HeadInner>
                    <Arrow dir="down" />
                  </HeadInner>
                </HeadCell>
                <HeadCell>Тип</HeadCell>
                <HeadCell>
                  <HeadInner>
                    Реєстр. № <SortMark />
                  </HeadInner>
                </HeadCell>
                <HeadCell>Шифр</HeadCell>
                <HeadCell>
                  Найменування будови, об'єкта
                  <br />
                  будівництва (ремонту)
                </HeadCell>
                <HeadCell>
                  <VerticalText>Статус</VerticalText>
                </HeadCell>
                <HeadCell>Замовник</HeadCell>
              </tr>
            </thead>
            <tbody>
              {rows.map((row, key) => (
                <ProjectRow key={key} row={row} />
              ))}
            </tbody>
          </Grid>
        </GridView>
        <TotalsTable>
          <GridCols />
          <tbody>
            <tr>
              <td />
              <td>Разом:</td>
              <td />
              <td />
              <td />
              <td />
              <td />
            </tr>
          </tbody>
        </TotalsTable>
      </GridColumn>
      <ScrollV>
        <Chevron dir="up" />
        <ThumbV />
        <Chevron dir="down" />
      </ScrollV>
    </GridRow>
    <ScrollH>
      <Chevron dir="left" />
      <ThumbH />
      <Chevron dir="right" />
    </ScrollH>
  </>
);

const Notes = () => (
  <>
    <Tabs role="tablist">
      <Tab role="tab" $width={95}>
        Документи
      </Tab>
      <Tab role="tab" aria-selected="true" $active $width={87}>
        Примітки
      </Tab>
      <Tab role="tab" $width={304}>
        Показники
      </Tab>
    </Tabs>
    <NotesPanel>
      <NotesBar>
        <NoteButton>
          <NoteIcon />
          Додати
        </NoteButton>
        <NoteButton disabled>
          <NoteIcon remove />
          Видалити
        </NoteButton>
      </NotesBar>
      <NotesView>
        <Grid>
          <colgroup>
            <col style={{ width: 12 }} />
            <col style={{ width: 152 }} />
            <col style={{ width: 122 }} />
            <col />
          </colgroup>
          <thead>
            <tr>
              <HeadCell $height={24} $side />
              <HeadCell>
                <HeadInner $spread>
                  <span>Дата</span>
                  <SortMark />
                </HeadInner>
              </HeadCell>
              <HeadCell>Автор</HeadCell>
              <HeadCell>Примітка</HeadCell>
            </tr>
          </thead>
          <tbody>
            <tr>
              <SideCell>
                <RowPointer />
              </SideCell>
              <NoteCell>16.05.2022 14:20:46</NoteCell>
              <NoteCell $inset={5}>Kucher V</NoteCell>
              <NoteCell $align="right">
                Реконструкція ПЛ 0,4 кВ від ТП 361 РБ 1 з улаштуванням
              </NoteCell>
            </tr>
          </tbody>
        </Grid>
      </NotesView>
    </NotesPanel>
  </>
);

const ContextMenu = () => {
  const [active, setActive] = useState("Зберегти документ у хмарі");

  return (
    <Menu>
      <MenuList role="menu">
        {menu.map((item, key) =>
          item ? (
            <li key={key} role="none">
              <MenuItem
                role="menuitem"
                disabled={item.disabled}
                $active={item.label === active}
                onMouseEnter={() => setActive(item.label)}
              >
                <MenuIcon>{item.icon}</MenuIcon>
                <MenuLabel>{item.label}</MenuLabel>
                {item.keys && <span>{item.keys}</span>}
                {item.sub && <Arrow dir="right" />}
              </MenuItem>
            </li>
          ) : (
            <MenuRule key={key} role="separator" />
          )
        )}
      </MenuList>
    </Menu>
  );
};

const App = () => (
  <Window>
    <GlobalStyle />
    <TitleBar>
      <LogoIcon />
      <Title>
        {'Будівельні Технології: Кошторис 8.4    сеанс "Vishnevsky A"  домен "БУДІВЛІ" роль "Менеджер проекту"'}
      </Title>
      <WindowButtons>
        <button aria-label="Згорнути">
          <svg width="11" height="11">
            <path d="M0 5h11v1H0z" />
          </svg>
        </button>
        <button aria-label="Розгорнути">
          <svg width="11" height="11">
            <path d="M0 0h11v11H0zM1 1v9h9V1z" fillRule="evenodd" />
          </svg>
        </button>
        <button aria-label="Закрити">
          <svg width="12" height="12">
            <path d="M1 1l10 10M11 1L1 11" stroke="#000" />
          </svg>
        </button>
      </WindowButtons>
    </TitleBar>
    <MenuBar>
      {menuBar.map((item) => (
        <MenuBarItem key={item.label} disabled={item.disabled}>
          {item.label}
        </MenuBarItem>
      ))}
    </MenuBar>
    <Toolbar>
      {tools.map((tool) => (
        <ToolButton key={tool.label} $width={tool.width}>
          {tool.icon}
          {tool.label}
          {tool.drop && <Arrow dir="down" small />}
        </ToolButton>
      ))}
      <Alert>
        <CloudDocIcon size={24} />
        Вам надіслано 2 документи
      </Alert>
    </Toolbar>
    <TabStrip>
      <PageTab>
        Будови
        <BoxButton $size={15} aria-label="Закрити вкладку">
          <svg width="9" height="9">
            <path d="M1 1l7 7M8 1L1 8" stroke={blue} strokeWidth="2" />
          </svg>
        </BoxButton>
      </PageTab>
      <BoxButton $size={18} aria-label="Список вкладок">
        <Arrow dir="down" />
      </BoxButton>
    </TabStrip>
    <Workspace>
      <Folders />
      <Splitter $vertical>
        <Handle $vertical $length={238}>
          <Arrow dir="left" small color={blue} />
          <Dots $vertical />
          <Arrow dir="left" small color={blue} />
        </Handle>
      </Splitter>
      <RightPane>
        <FilterBar $height={30}>
          <FilterLabel htmlFor="filter">Фільтр</FilterLabel>
          <Search id="filter" width={308} />
        </FilterBar>
        <Projects />
        <Splitter>
          <Handle $length={436}>
            <Arrow dir="down" small color={blue} />
            <Dots />
            <Arrow dir="down" small color={blue} />
          </Handle>
        </Splitter>
        <Notes />
        <ContextMenu />
      </RightPane>
    </Workspace>
  </Window>
);

export default App;
